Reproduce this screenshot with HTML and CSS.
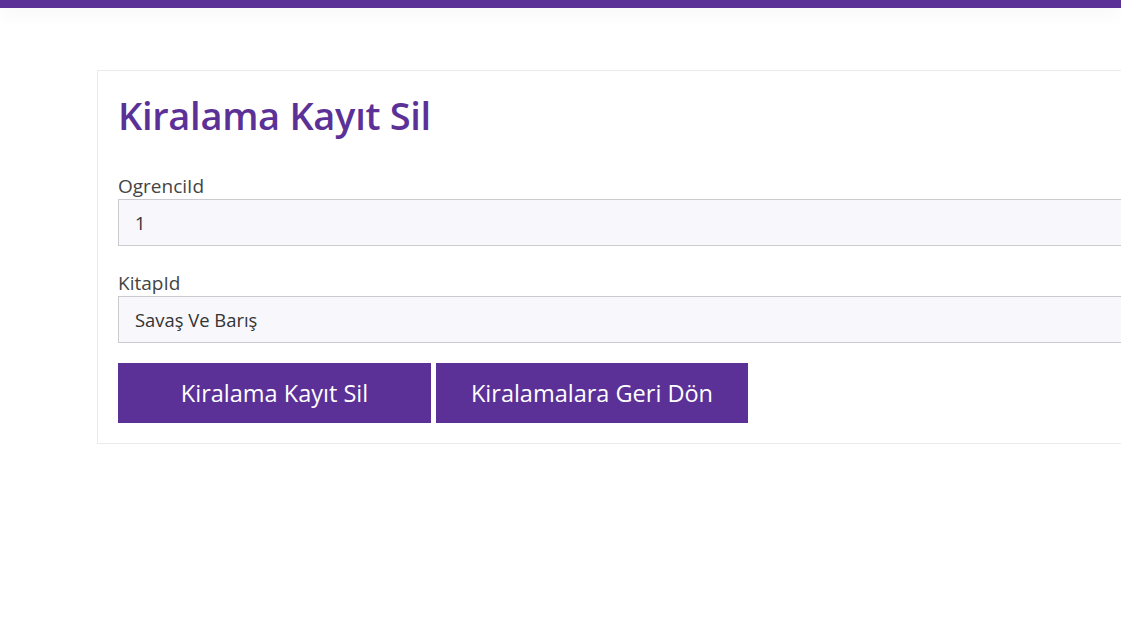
FILE: index.html
```html
<!DOCTYPE html>
<html lang="tr">
<head>
<meta charset="utf-8">
<title>Kiralama Kayıt Sil</title>
<link rel="stylesheet" href="styles.css">
</head>
<body>
<header class="topbar"></header>
<main class="page">
  <section class="card">
    <h1 class="title">Kiralama Kayıt Sil</h1>
    <div class="field">
      <label class="label" for="ogr">OgrenciId</label>
      <input class="input" id="ogr" type="text" value="1" readonly>
    </div>
    <div class="field field-last">
      <label class="label" for="kit">KitapId</label>
      <input class="input" id="kit" type="text" value="Savaş Ve Barış" readonly>
    </div>
    <div class="actions">
      <button class="btn btn-first" type="submit">Kiralama Kayıt Sil</button>
      <button class="btn btn-second" type="button">Kiralamalara Geri Dön</button>
    </div>
  </section>
</main>
</body>
</html>
```

FILE: styles.css
```css
html, body {
  margin: 0;
  padding: 0;
  overflow: hidden;
  background: #ffffff;
  font-family: "Open Sans", "Noto Sans", sans-serif;
}

.topbar {
  height: 8px;
  background: #5b3198;
  box-shadow: 0 4px 18px rgba(0, 0, 0, 0.06);
}

.page {
  padding-top: 62px;
  padding-left: 97px;
}

.card {
  width: 1100px;
  border: 1px solid #ebebeb;
  padding: 20px;
  box-sizing: border-box;
}

.title {
  margin: 0 0 36px 0;
  font-size: 38px;
  line-height: 48px;
  font-weight: 600;
  color: #5b3198;
  letter-spacing: -0.3px;
}

.field {
  display: flex;
  flex-direction: column;
  margin-bottom: 26px;
}

.field-last {
  margin-bottom: 20px;
}

.label {
  font-size: 19px;
  line-height: 22px;
  padding-bottom: 2px;
  color: #444444;
}

.input {
  height: 47px;
  box-sizing: border-box;
  border: 1px solid #cbcbcf;
  background: #f8f7fc;
  padding: 0 16px;
  font-family: inherit;
  font-size: 18.4px;
  color: #333333;
  outline: none;
}

.actions {
  display: flex;
  gap: 5px;
}

.btn {
  height: 60px;
  border: none;
  background: #5b3198;
  color: #ffffff;
  font-family: inherit;
  font-size: 23.5px;
  padding: 0;
  cursor: pointer;
}

.btn-first {
  width: 313px;
}

.btn-second {
  width: 312px;
}
```
